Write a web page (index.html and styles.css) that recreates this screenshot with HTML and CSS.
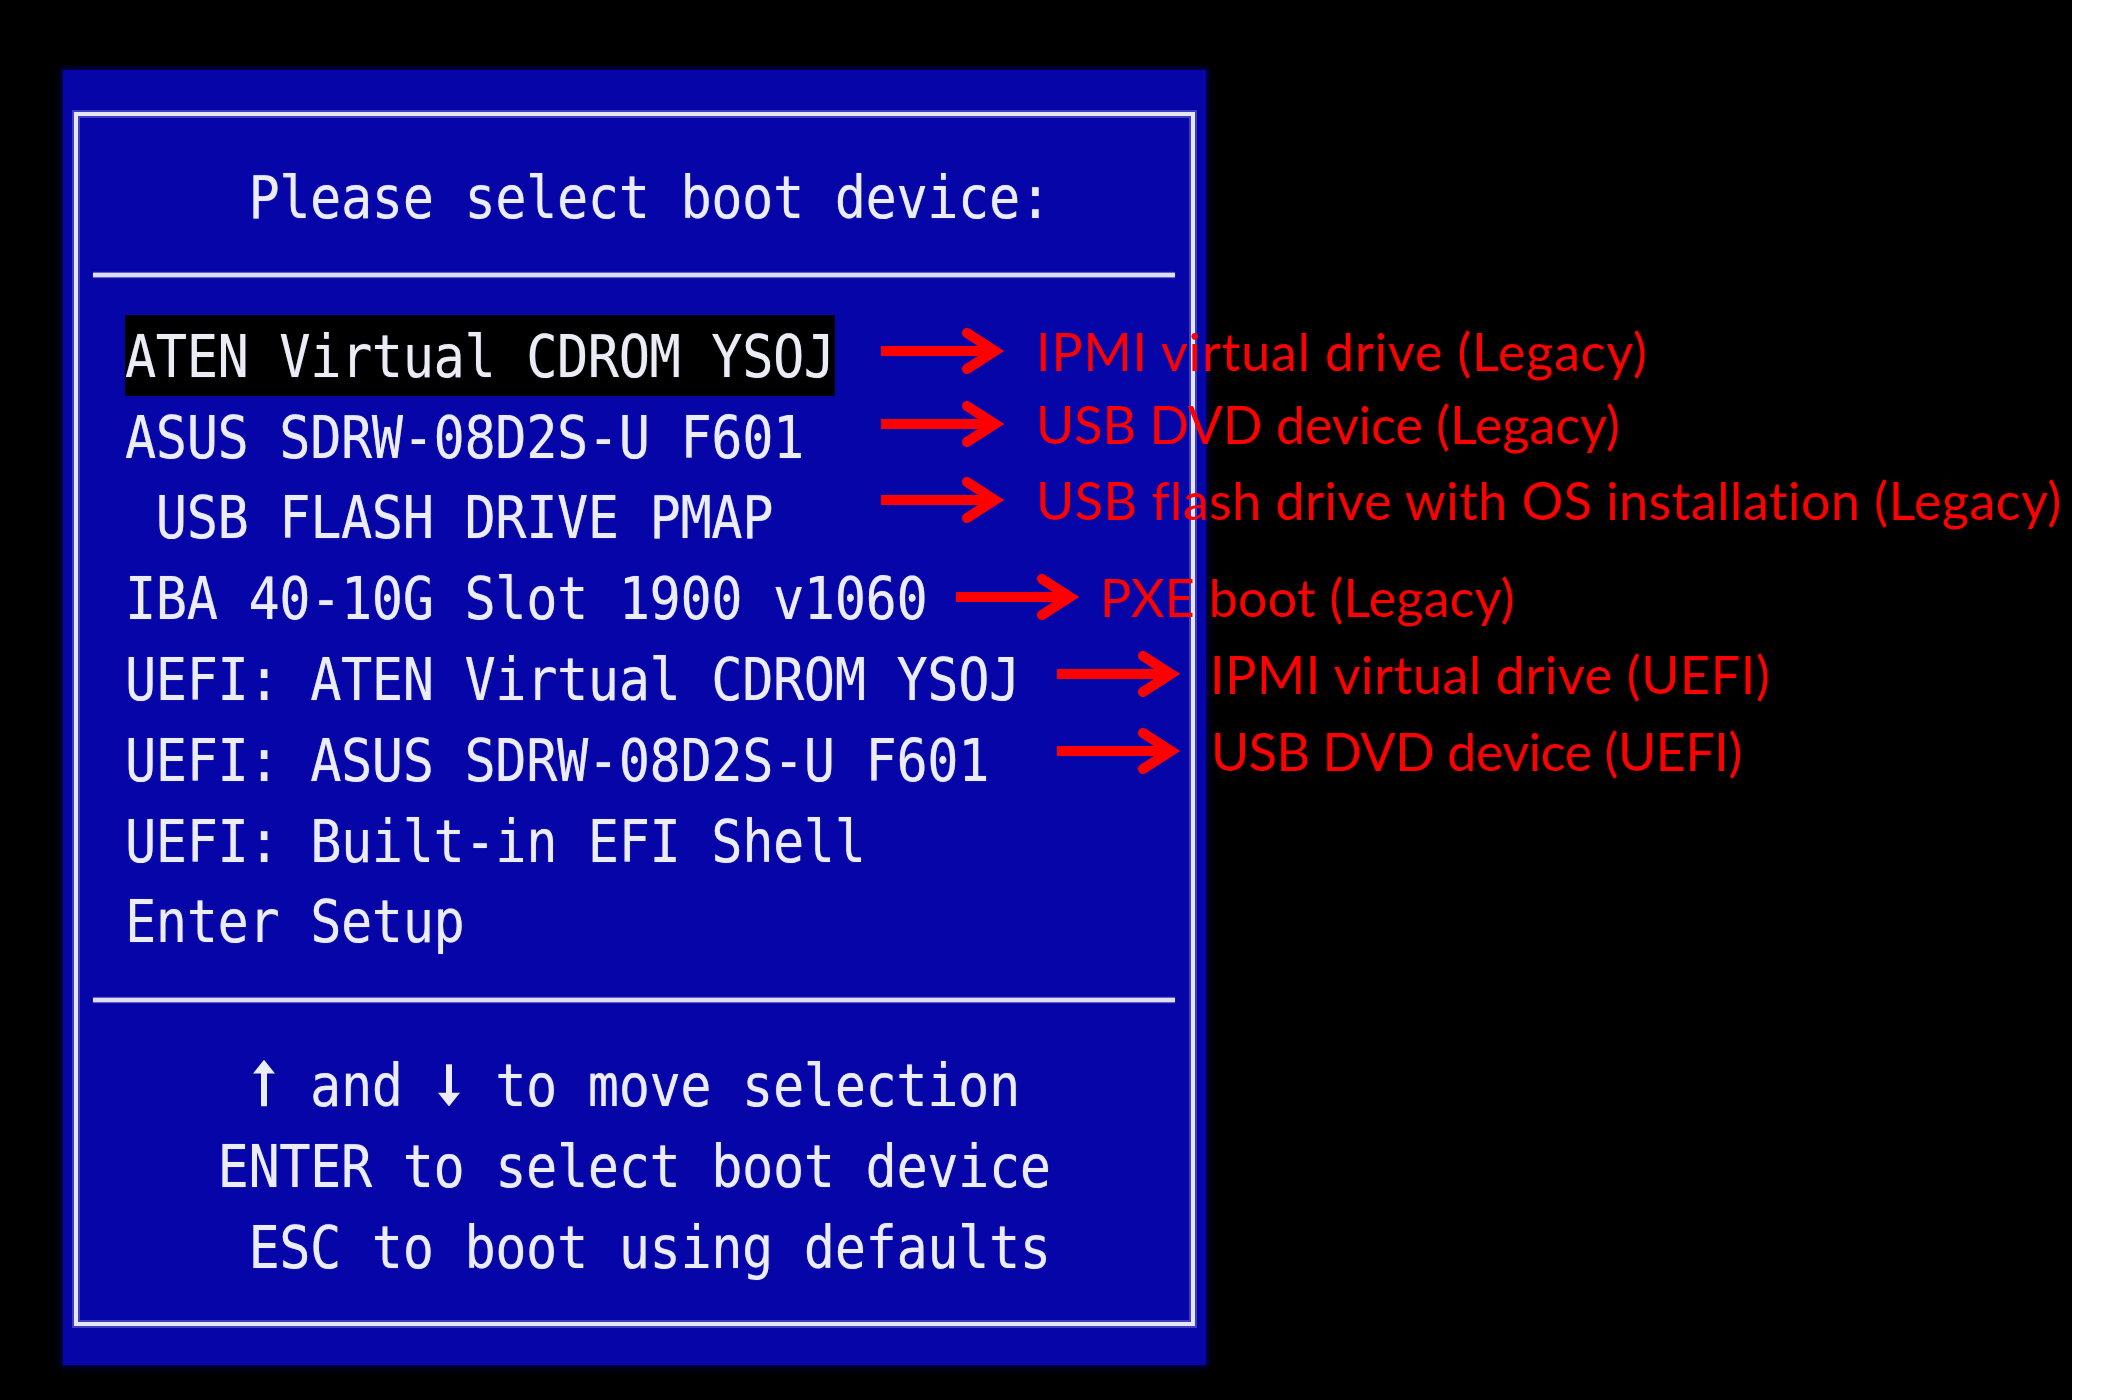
FILE: index.html
```html
<!DOCTYPE html>
<html lang="en">
<head>
<meta charset="utf-8">
<title>Please select boot device</title>
<link rel="stylesheet" href="styles.css">
</head>
<body>
<div class="screen">
  <div class="panel">
    <div class="frame">
      <div class="bios title"><span class="t">Please select boot device:</span></div>
      <div class="sep sep-top"></div>
      <div class="menu">
        <div class="bios"><span class="sel"><span class="t">ATEN Virtual CDROM YSOJ</span></span></div>
        <div class="bios"><span class="t">ASUS SDRW-08D2S-U F601</span></div>
        <div class="bios"><span class="t"> USB FLASH DRIVE PMAP</span></div>
        <div class="bios"><span class="t">IBA 40-10G Slot 1900 v1060</span></div>
        <div class="bios"><span class="t">UEFI: ATEN Virtual CDROM YSOJ</span></div>
        <div class="bios"><span class="t">UEFI: ASUS SDRW-08D2S-U F601</span></div>
        <div class="bios"><span class="t">UEFI: Built-in EFI Shell</span></div>
        <div class="bios"><span class="t">Enter Setup</span></div>
      </div>
      <div class="sep sep-bottom"></div>
      <div class="help">
        <div class="bios c4"><span class="t"><span class="key" aria-label="↑"><svg viewBox="0 0 22 41" width="22" height="41"><path d="M11 0L22 12H0Z"/><rect x="8" y="10" width="6" height="31"/></svg></span> and <span class="key" aria-label="↓"><svg viewBox="0 0 22 41" width="22" height="41"><path d="M11 41L22 29H0Z"/><rect x="8" y="4" width="6" height="27"/></svg></span> to move selection</span></div>
        <div class="bios c3"><span class="t">ENTER to select boot device</span></div>
        <div class="bios c4"><span class="t">ESC to boot using defaults</span></div>
      </div>
    </div>
  </div>

  <div class="note n1">
    <svg class="arrow" viewBox="0 0 126 46" width="126" height="46"><path d="M0 23H112" /><path class="head" d="M86 5L114 23L86 41" /></svg>
    <span>IPMI virtual drive (Legacy)</span>
  </div>
  <div class="note n2">
    <svg class="arrow" viewBox="0 0 126 46" width="126" height="46"><path d="M0 23H112" /><path class="head" d="M86 5L114 23L86 41" /></svg>
    <span>USB DVD device (Legacy)</span>
  </div>
  <div class="note n3">
    <svg class="arrow" viewBox="0 0 126 46" width="126" height="46"><path d="M0 23H112" /><path class="head" d="M86 5L114 23L86 41" /></svg>
    <span>USB flash drive with OS installation (Legacy)</span>
  </div>
  <div class="note n4">
    <svg class="arrow" viewBox="0 0 126 46" width="126" height="46"><path d="M0 23H112" /><path class="head" d="M86 5L114 23L86 41" /></svg>
    <span>PXE boot (Legacy)</span>
  </div>
  <div class="note n5">
    <svg class="arrow" viewBox="0 0 126 46" width="126" height="46"><path d="M0 23H112" /><path class="head" d="M86 5L114 23L86 41" /></svg>
    <span>IPMI virtual drive (UEFI)</span>
  </div>
  <div class="note n6">
    <svg class="arrow" viewBox="0 0 126 46" width="126" height="46"><path d="M0 23H112" /><path class="head" d="M86 5L114 23L86 41" /></svg>
    <span>USB DVD device (UEFI)</span>
  </div>
</div>
</body>
</html>
```
FILE: styles.css
```css
:root {
  --cell: 30.85px;
  --lh: 80.8px;
}

html, body {
  margin: 0;
  background: #ffffff;
}

.screen {
  position: relative;
  width: 2072px;
  height: 1400px;
  background: #000000;
  box-sizing: border-box;
  padding: 70px 0 0 63px;
  overflow: hidden;
}

.panel {
  width: 1143px;
  height: 1295px;
  box-sizing: border-box;
  padding: 42px 11px 39px;
  background: #0606a8;
  box-shadow: 0 0 6px 2px #00005c;
}

.frame {
  height: 100%;
  box-sizing: border-box;
  border: 4px solid #e6e6f2;
  box-shadow: 0 0 0 2px #3c3cc4, inset 0 0 0 2px #3c3cc4;
  padding-top: 40px;
  display: flex;
  flex-direction: column;
}

.bios {
  height: var(--lh);
  line-height: var(--lh);
  padding-left: 47px;
  font-family: "DejaVu Sans Mono", "Liberation Mono", monospace;
  font-size: 52px;
  letter-spacing: -0.45px;
  color: #ececf4;
  white-space: pre;
  text-shadow: 0 0 1px rgba(190, 190, 255, 0.6);
}

.bios .t {
  display: inline-block;
  vertical-align: top;
  transform: translateY(2px) scaleY(1.14);
}

.key {
  display: inline-block;
  width: var(--cell);
  text-align: center;
  vertical-align: baseline;
}

.key svg {
  display: inline-block;
  vertical-align: baseline;
  fill: #ececf4;
}

.title {
  padding-left: calc(47px + 4 * var(--cell));
}

.sel {
  display: inline-block;
  vertical-align: top;
  height: var(--lh);
  background: #000000;
}

.sep {
  height: 4px;
  margin: 0 16px 0 15px;
  background: #dedef0;
  box-shadow: 0 1px 1px #6a6ad6, 0 -1px 1px #6a6ad6;
}

.sep-top {
  margin-top: 36px;
}

.menu {
  margin-top: 38px;
}

.sep-bottom {
  margin-top: 37px;
}

.help {
  margin-top: 42px;
}

.c3 {
  padding-left: calc(47px + 3 * var(--cell));
}

.c4 {
  padding-left: calc(47px + 4 * var(--cell));
}

/* red annotations laid over the screenshot */
.note {
  position: absolute;
  display: flex;
  align-items: center;
  height: 46px;
}

.arrow {
  flex: none;
  display: block;
}

.arrow path {
  fill: none;
  stroke: #ff0000;
  stroke-width: 10;
}

.arrow .head {
  stroke-width: 10;
  stroke-linecap: round;
  stroke-linejoin: miter;
}

.note span {
  font-family: Lato, "Liberation Sans", sans-serif;
  font-size: 52px;
  line-height: 46px;
  color: #ff0000;
  white-space: nowrap;
  margin-left: 29px;
}

.n1 { left: 881px; top: 328px; }
.n1 span { letter-spacing: 0.85px; }
.n2 { left: 881px; top: 401px; }
.n3 { left: 881px; top: 477px; }
.n3 span { letter-spacing: 0.5px; }
.n4 { left: 956px; top: 574px; }
.n4 span { margin-left: 18px; letter-spacing: 0.25px; }
.n5 { left: 1057px; top: 651px; }
.n5 span { margin-left: 27px; letter-spacing: 0.6px; }
.n6 { left: 1057px; top: 728px; }
.n6 span { margin-left: 28px; letter-spacing: -0.45px; }
```
